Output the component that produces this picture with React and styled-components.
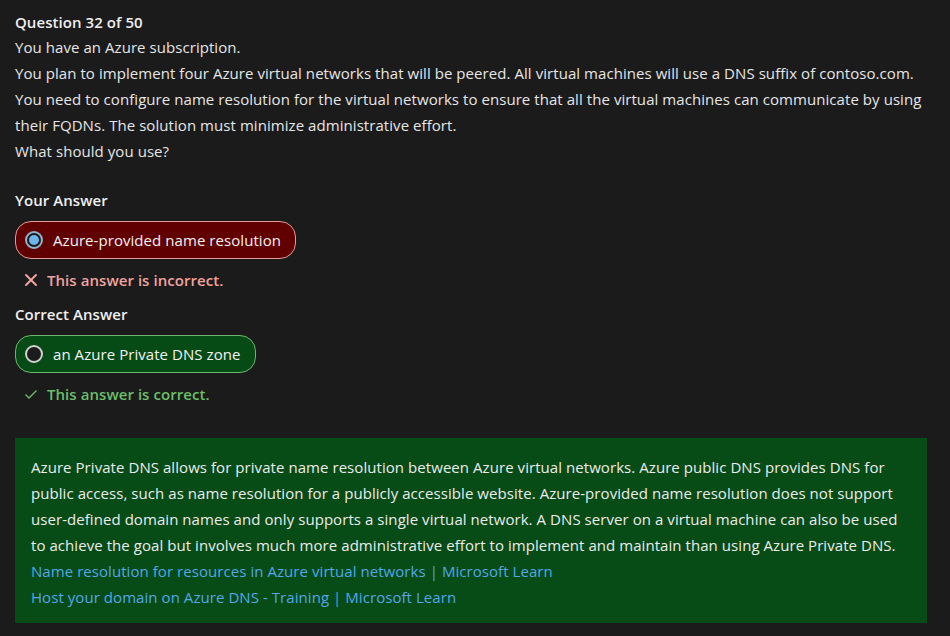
import React from 'react';
import styled, { createGlobalStyle } from 'styled-components';

const GlobalStyle = createGlobalStyle`
  html, body {
    margin: 0;
    padding: 0;
    background: #1b1b1b;
  }
  body {
    font-family: 'Open Sans', 'Noto Sans', sans-serif;
    font-size: 15px;
    letter-spacing: 0.06px;
    color: #e6e6e6;
  }
`;

const Page = styled.div`
  width: 950px;
  height: 636px;
  box-sizing: border-box;
  padding: 11px 23px 0 15px;
  overflow: hidden;
`;

const Heading = styled.div`
  font-weight: 600;
  line-height: 22px;
  margin-top: ${(p) => p.$top || 0}px;
  color: #f0f0f0;
`;

const Line = styled.p`
  margin: 0;
  line-height: 26px;
`;

const Question = styled.div`
  margin-top: 1px;
`;

const Pill = styled.div`
  display: inline-flex;
  align-items: center;
  gap: 10px;
  height: 38px;
  box-sizing: border-box;
  padding: 0 14px 0 9px;
  margin-top: 10px;
  border-radius: 16px;
  border: 1px solid ${(p) => (p.$correct ? '#6cb56e' : '#e39a9a')};
  background: ${(p) => (p.$correct ? '#064b15' : '#600000')};
  color: #f2f2f2;
`;

const Radio = styled.span`
  width: 18px;
  height: 18px;
  box-sizing: border-box;
  border-radius: 50%;
  border: 2px solid ${(p) => (p.$checked ? '#8fb4cf' : '#d0d0d0')};
  background: #1c1c1c;
  display: flex;
  align-items: center;
  justify-content: center;

  &::after {
    content: '';
    display: ${(p) => (p.$checked ? 'block' : 'none')};
    width: 10px;
    height: 10px;
    border-radius: 50%;
    background: #6db6ea;
  }
`;

const Feedback = styled.div`
  display: flex;
  align-items: center;
  gap: 9px;
  margin: 8px 0 0 9px;
  line-height: 26px;
  font-weight: 600;
  color: ${(p) => (p.$correct ? '#6cbf6a' : '#f0a39f')};
`;

const Explanation = styled.div`
  margin-top: 31px;
  background: #074b16;
  padding: 16px 16px 13px 16px;
  color: #ececec;
`;

const Link = styled.a`
  display: block;
  color: #52a8e8;
  text-decoration: none;
  line-height: 26px;
`;

const Cross = () => (
  <svg width="14" height="14" viewBox="0 0 14 14">
    <path d="M2 2 L12 12 M12 2 L2 12" stroke="#f0a39f" strokeWidth="2" strokeLinecap="round" />
  </svg>
);

const Check = () => (
  <svg width="14" height="14" viewBox="0 0 14 14">
    <path d="M1.5 7.5 L5 11 L12.5 3.5" stroke="#6cbf6a" strokeWidth="1.3" fill="none" />
  </svg>
);

export default function App() {
  return (
    <>
      <GlobalStyle />
      <Page>
        <Heading>Question 32 of 50</Heading>
        <Question>
          <Line>You have an Azure subscription.</Line>
          <Line>
            You plan to implement four Azure virtual networks that will be peered. All virtual
            machines will use a DNS suffix of contoso.com.
          </Line>
          <Line>
            You need to configure name resolution for the virtual networks to ensure that all the
            virtual machines can communicate by using their FQDNs. The solution must minimize
            administrative effort.
          </Line>
          <Line>What should you use?</Line>
        </Question>

        <Heading $top={25}>Your Answer</Heading>
        <Pill>
          <Radio $checked />
          Azure-provided name resolution
        </Pill>
        <Feedback>
          <Cross />
          This answer is incorrect.
        </Feedback>

        <Heading $top={10}>Correct Answer</Heading>
        <Pill $correct>
          <Radio />
          an Azure Private DNS zone
        </Pill>
        <Feedback $correct>
          <Check />
          This answer is correct.
        </Feedback>

        <Explanation>
          <Line>
            Azure Private DNS allows for private name resolution between Azure virtual networks.
            Azure public DNS provides DNS for public access, such as name resolution for a publicly
            accessible website. Azure-provided name resolution does not support user-defined domain
            names and only supports a single virtual network. A DNS server on a virtual machine can
            also be used to achieve the goal but involves much more administrative effort to
            implement and maintain than using Azure Private DNS.
          </Line>
          <Link href="#">Name resolution for resources in Azure virtual networks | Microsoft Learn</Link>
          <Link href="#">Host your domain on Azure DNS - Training | Microsoft Learn</Link>
        </Explanation>
      </Page>
    </>
  );
}
